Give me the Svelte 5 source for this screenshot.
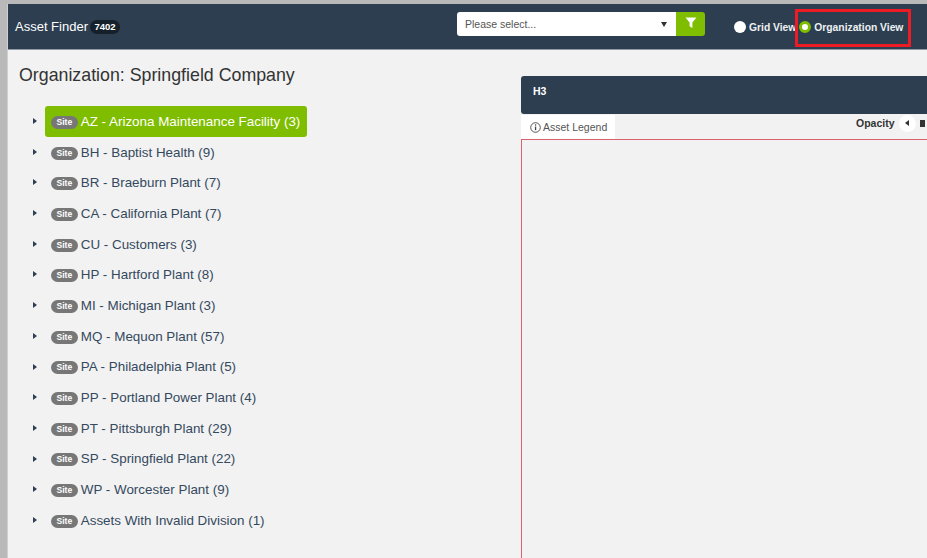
<script lang="ts">
	const sites = [
		'AZ - Arizona Maintenance Facility (3)',
		'BH - Baptist Health (9)',
		'BR - Braeburn Plant (7)',
		'CA - California Plant (7)',
		'CU - Customers (3)',
		'HP - Hartford Plant (8)',
		'MI - Michigan Plant (3)',
		'MQ - Mequon Plant (57)',
		'PA - Philadelphia Plant (5)',
		'PP - Portland Power Plant (4)',
		'PT - Pittsburgh Plant (29)',
		'SP - Springfield Plant (22)',
		'WP - Worcester Plant (9)',
		'Assets With Invalid Division (1)'
	];
</script>

<div class="page">
	<div class="top-edge"></div>
	<div class="app">
		<header class="navbar">
			<div class="brand">
				<span>Asset Finder</span>
				<span class="count">7402</span>
			</div>
			<div class="finder">
				<div class="select">
					<span>Please select...</span>
					<span class="caret"></span>
				</div>
				<button class="filter" aria-label="Filter">
					<svg width="12" height="12" viewBox="0 0 12 12"><path d="M0.5 0.5h11L7.4 5.6V11L4.6 9.3V5.6z" fill="#fff" /></svg>
				</button>
			</div>
			<div class="views">
				<label class="view"><span class="radio"></span>Grid View</label>
				<label class="view org"><span class="radio on"></span>Organization View</label>
				<div class="highlight"></div>
			</div>
		</header>

		<main class="body">
			<section class="tree">
				<h1>Organization: Springfield Company</h1>
				<ul>
					{#each sites as site, i}
						<li>
							<span class="arrow"></span>
							<div class="node" class:active={i === 0}>
								<span class="site">Site</span>
								<span>{site}</span>
							</div>
						</li>
					{/each}
				</ul>
			</section>

			<section class="detail">
				<div class="detail-head">H3</div>
				<div class="tools">
					<div class="legend">
						<svg width="11" height="11" viewBox="0 0 11 11">
							<circle cx="5.5" cy="5.5" r="4.8" fill="none" stroke="#444" stroke-width="0.9" />
							<rect x="4.9" y="4.6" width="1.3" height="3.6" fill="#444" />
							<rect x="4.9" y="2.4" width="1.3" height="1.3" fill="#444" />
						</svg>
						Asset Legend
					</div>
					<div class="opacity">
						<span>Opacity</span>
						<span class="step"><span class="left"></span></span>
						<span class="handle"></span>
					</div>
				</div>
				<div class="map"></div>
			</section>
		</main>
	</div>
</div>

<style>
	:global(body) {
		margin: 0;
		background: #f2f2f2;
		overflow: hidden;
	}

	.page {
		width: 927px;
		height: 558px;
		overflow: hidden;
		font-family: 'Liberation Sans', Arial, sans-serif;
		color: #34495e;
	}

	.top-edge {
		height: 4px;
		background: #b9b9b9;
	}

	.app {
		margin-left: 7px;
		border-left: 1px solid #cfcfcf;
		height: 554px;
		position: relative;
	}

	.app::before {
		content: '';
		position: absolute;
		left: -8px;
		top: 0;
		bottom: 0;
		width: 7px;
		background: #b9b9b9;
	}

	.navbar {
		height: 45px;
		background: #2c3e50;
		border-bottom: 1px solid #8f9aa5;
		display: flex;
		align-items: flex-start;
		color: #fff;
		box-sizing: content-box;
	}

	.brand {
		display: flex;
		align-items: center;
		gap: 2px;
		margin: 14px 0 0 7px;
		font-size: 13px;
		line-height: 18px;
		width: 442px;
	}

	.count {
		background: #15202b;
		border-radius: 9px;
		font-size: 9.5px;
		font-weight: bold;
		line-height: 14px;
		padding: 0 4.5px;
	}

	.finder {
		display: flex;
		margin-top: 8px;
		width: 248px;
		height: 24px;
	}

	.select {
		flex: 1;
		background: #fff;
		border-radius: 3px 0 0 3px;
		display: flex;
		align-items: center;
		justify-content: space-between;
		padding: 0 9px 0 8px;
		font-size: 10.5px;
		color: #555;
	}

	.caret {
		border-left: 3.5px solid transparent;
		border-right: 3.5px solid transparent;
		border-top: 5px solid #333;
	}

	.filter {
		width: 29px;
		border: 0;
		padding: 0 0 2px;
		background: #7fbd00;
		border-radius: 0 3px 3px 0;
		display: flex;
		align-items: center;
		justify-content: center;
	}

	.views {
		display: flex;
		margin: 16px 0 0 29px;
		position: relative;
		color: #eef1f3;
		font-size: 10.3px;
		font-weight: bold;
		white-space: nowrap;
	}

	.view {
		display: flex;
		align-items: center;
		gap: 3px;
		height: 14px;
	}

	.org {
		margin-left: 3px;
	}

	.radio {
		width: 12px;
		height: 12px;
		border-radius: 50%;
		background: #fff;
		box-sizing: border-box;
	}

	.radio.on {
		background: #fff;
		border: 3px solid #7fbd00;
	}

	.highlight {
		position: absolute;
		left: 61px;
		top: -11px;
		width: 110px;
		height: 32px;
		border: 3px solid #ed1c24;
	}

	.body {
		display: flex;
		align-items: flex-start;
	}

	.tree {
		width: 513px;
		padding-left: 11px;
		box-sizing: border-box;
	}

	h1 {
		margin: 14px 0 20px;
		font-size: 17.8px;
		line-height: 22px;
		font-weight: normal;
		color: #333;
	}

	ul {
		list-style: none;
		margin: 0;
		padding: 0;
	}

	li {
		display: flex;
		align-items: center;
		height: 30.69px;
		position: relative;
		padding-left: 26px;
		font-size: 13.4px;
	}

	.arrow {
		position: absolute;
		left: 14px;
		top: 12px;
		border-top: 3px solid transparent;
		border-bottom: 3px solid transparent;
		border-left: 4px solid #2c3e50;
	}

	.node {
		display: flex;
		align-items: center;
		gap: 3px;
		height: 31px;
		padding: 0 7px 0 6px;
		border-radius: 3px;
		white-space: nowrap;
	}

	.node.active {
		background: #7fbd00;
		color: #fff;
	}

	.site {
		background: #777;
		color: #fff;
		font-size: 8.6px;
		font-weight: bold;
		line-height: 13px;
		padding: 0 5.5px;
		border-radius: 7px;
		position: relative;
		top: 1px;
	}

	.detail {
		flex: 1;
		margin-top: 26px;
		min-width: 0;
	}

	.detail-head {
		height: 38px;
		background: #2c3e50;
		border-radius: 3px 0 0 3px;
		color: #fff;
		font-size: 10.5px;
		font-weight: bold;
		padding: 9px 0 0 12px;
		box-sizing: border-box;
	}

	.tools {
		display: flex;
		justify-content: space-between;
		height: 25px;
	}

	.legend {
		display: flex;
		align-items: center;
		gap: 2px;
		width: 94px;
		box-sizing: border-box;
		padding-left: 9px;
		background: #fff;
		font-size: 10.5px;
		color: #555;
		height: 24px;
		margin-top: 1px;
	}

	.opacity {
		display: flex;
		align-items: center;
		gap: 4px;
		height: 18px;
		font-size: 10.5px;
		font-weight: bold;
		color: #333;
		width: 71px;
		flex: none;
	}

	.step {
		width: 17px;
		height: 17px;
		border-radius: 50%;
		background: #fff;
		display: flex;
		align-items: center;
		justify-content: center;
	}

	.left {
		border-top: 3px solid transparent;
		border-bottom: 3px solid transparent;
		border-right: 4px solid #333;
	}

	.handle {
		width: 5px;
		height: 7px;
		background: #333;
	}

	.map {
		height: 430px;
		border: 1px solid #d9606c;
		border-right: 0;
		background: #f2f2f2;
	}
</style>
